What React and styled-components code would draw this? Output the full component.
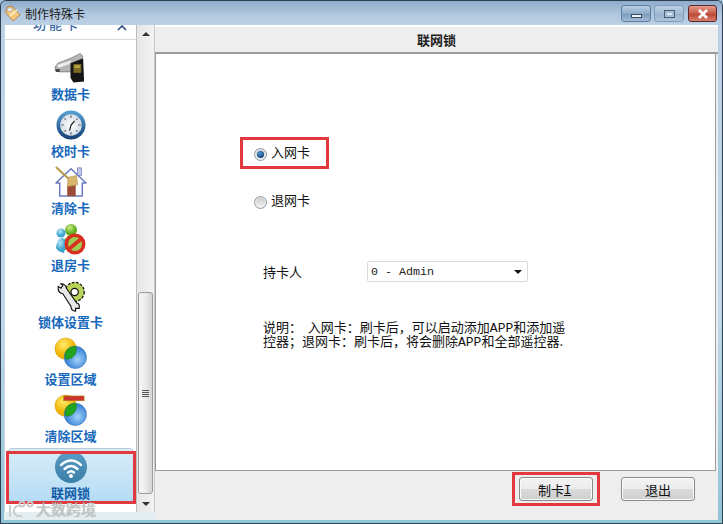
import React from 'react';
import styled, { createGlobalStyle } from 'styled-components';

const Global = createGlobalStyle`
  html, body { margin: 0; padding: 0; background: #a9c3dc; }
  * { box-sizing: border-box; }
`;
const CJK = `"Noto Sans CJK SC", "Liberation Sans", sans-serif`;
const MONO = `"Liberation Mono", "Noto Sans CJK SC", monospace`;

const Win = styled.div`
  position: relative; width: 723px; height: 524px; overflow: hidden;
  display: flex; flex-direction: column;
  background: linear-gradient(#a7c1de, #b9d0e6 25px, #c0d8ea 60%, #8fc4d6);
  border: 1px solid #2e3f4f; border-bottom-color: #2e4a58; border-radius: 6px 6px 0 0;
  font-family: ${CJK}; font-size: 13px; color: #111;
`;
const TitleBar = styled.div`
  height: 24px; flex: none; display: flex; align-items: center; padding: 0 5px 0 4px;
  background: linear-gradient(#8fabcb, #b3c9e0 60%, #bcd0e5);
`;
const TitleText = styled.span` margin-left: 4px; font-size: 12px; color: #1b1b1b; flex: 1; `;
const CtlGroup = styled.div` display: flex; gap: 3px; align-self: flex-start; margin-top: 4px; `;
const Ctl = styled.div`
  width: ${p => p.$w}px; height: 17px; display: flex; align-items: center; justify-content: center;
  margin-left: ${p => p.$close ? 1 : 0}px;
  border: 1px solid ${p => p.$close ? '#5a2a2a' : p.$dim ? '#7f9cba' : '#5f7f9f'}; border-radius: 3px;
  background: ${p => p.$close
    ? 'linear-gradient(#e39b8c, #c95a45 50%, #b84a35 55%, #d9806c)'
    : p.$dim
      ? 'linear-gradient(#bcd0e5, #a3bcd6 50%, #98b3cf 55%, #afc6dd)'
      : 'linear-gradient(#b9cee3, #8eacc9 50%, #7c9dbd 55%, #a3bcd6)'};
`;
const MinGlyph = styled.div` width: 11px; height: 4px; margin-top: 5px; background: #eef3f8; border: 1px solid #3c4c5c; `;
const MaxGlyph = styled.div` width: 11px; height: 8px; border: 1px solid #4c5c6c; background: #a6bed6;
  &::after { content: ''; display: block; width: 5px; height: 2px; margin: 2px auto; background: #dfe8f2; } `;
const Body = styled.div` flex: 1; min-height: 0; display: flex; padding: 0 4px 3px 3px; `;
const SideColumn = styled.div` flex: none; display: flex; align-items: flex-start; height: 495px; background: #e4edef; `;
const Side = styled.div` width: 133px; flex: none; display: flex; flex-direction: column; height: 487px; background: #fff;
  border-right: 1px solid #b5c0c8; border-left: 1px solid #c7d3dd; `;
const SideHead = styled.div`
  height: 15px; flex: none; position: relative; overflow: hidden; border-bottom: 1px solid #d3dbe3;
`;
const SideHeadText = styled.div`
  position: absolute; left: 28px; top: -11px; letter-spacing: 3px;
  color: #3a6aa5; font-size: 13px; font-weight: 500; white-space: nowrap;
`;
const Chev = styled.svg` position: absolute; left: 112px; top: 0; `;
const SideList = styled.div` flex: 1; display: flex; flex-direction: column; align-items: center; padding-top: 11px; `;
const Item = styled.div`
  width: ${p => p.$active ? 127 : 130}px; height: ${p => p.$active ? 55 : 57}px; flex: none; display: flex; flex-direction: column; align-items: center;
  color: #1668bc; font-weight: 700; font-size: 13px; line-height: 14px;
  ${p => p.$active && `
    margin-top: -2px;
    padding-top: 1px;
    background: linear-gradient(#d8ecf7, #b4dcf5);
    border: 1px solid #b9cbd6; border-bottom: 0; border-radius: 5px 5px 0 0;
    color: #125ba8;
  `}
`;
const IconBox = styled.div` height: 34px; display: flex; align-items: center; justify-content: center; flex: none; margin-bottom: 2px; `;
const ScrollTrack = styled.div`
  width: 18px; height: 487px; flex: none; display: flex; flex-direction: column; align-items: center;
  background: linear-gradient(90deg, #e6e6e6, #f2f2f2);
  border-right: 1px solid #c9c9c9;
`;
const Arrow = styled.div`
  width: 0; height: 0; flex: none; border-left: 4px solid transparent; border-right: 4px solid transparent;
  ${p => p.$up ? 'border-bottom: 4px solid #333; margin-top: 7px;' : 'border-top: 4px solid #333; margin-top: 8px;'}
`;
const Thumb = styled.div`
  width: 15px; height: 202px; flex: none; margin-top: 256px; display: flex; flex-direction: column; align-items: center; justify-content: center; gap: 1px;
  border: 1px solid #9a9a9a; border-radius: 3px; background: linear-gradient(90deg, #f7f7f7, #ededed 45%, #d4d4d4);
`;
const Grip = styled.div` width: 7px; height: 1px; background: #555; `;
const Main = styled.div` flex: 1; min-width: 0; display: flex; flex-direction: column; background: #eee; height: 495px; `;
const MainHead = styled.div`
  height: 29px; flex: none; display: flex; align-items: center; justify-content: center;
  font-weight: 700; font-size: 13px; color: #222; border-bottom: 2px solid #9a9a9a;
  border-top: 2px solid #fff;
`;
const Content = styled.div`
  flex: none; height: 417px; margin-right: 2px; background: #fff; border: 1px solid #9c9c9c; border-top: 0;
  padding: 83px 0 0 84px; display: flex; flex-direction: column; align-items: flex-start;
`;
const RadioRow = styled.div`
  position: relative; display: flex; align-items: center; height: 32px; gap: 4px; padding-left: 14px;
  margin-bottom: ${p => p.$mb}px;
`;
const RadioLabel = styled.span` margin-top: -3px; `;
const Mark = styled.div`
  position: absolute; pointer-events: none; border: 3px solid #e2393e;
`;
const RadioBox = styled.div`
  width: 13px; height: 13px; border-radius: 50%; flex: none; margin-top: 2px;
  border: 1px solid #8c9aa4; display: flex; align-items: center; justify-content: center;
  background: linear-gradient(#c9c9c9, #f4f4f4);
  box-shadow: inset 0 0 0 1px #ececec;
`;
const RadioDot = styled.div`
  width: 7px; height: 7px; border-radius: 50%; background: radial-gradient(circle at 40% 35%, #4f9ad8, #143e78 75%);
`;
const Field = styled.div` display: flex; align-items: center; margin: 43px 0 0 23px; height: 22px; `;
const FieldLabel = styled.span` width: 104px; `;
const Select = styled.div`
  width: 161px; height: 21px; border: 1px solid #d6dbe0; border-radius: 2px; display: flex; align-items: center;
  justify-content: space-between; padding: 1px 3px 0 3px; font-family: ${MONO}; font-size: 11.7px; color: #222; background: #fff;
`;
const Caret = styled.div` width: 0; height: 0; margin-right: 2px; border-left: 4px solid transparent; border-right: 4px solid transparent; border-top: 4px solid #111; `;
const Desc = styled.div` margin: 38px 0 0 23px; line-height: 14px; white-space: pre; color: #111; `;
const Latin = styled.span` font-family: ${MONO}; font-size: 13px; line-height: 0; `;
const Footer = styled.div` flex: 1; display: flex; justify-content: flex-end; align-items: flex-start; padding: 6px 23px 0 0; gap: 28px; `;
const Btn = styled.div`
  position: relative; width: 74px; height: 24px; display: flex; align-items: center; justify-content: center; padding-right: ${p => p.$pr || 0}px;
  border: 1px solid #8a8a8a; border-radius: 3px; color: #111;
  background: linear-gradient(#f4f4f4, #ececec 48%, #dadada 52%, #cfcfcf);
  box-shadow: inset 0 0 0 1px #fafafa;
`;
const Under = styled.span` text-decoration: underline; font-family: ${MONO}; font-size: 12px; margin-top: 3px; `;
const Water = styled.div`
  position: absolute; left: 7px; top: 499px; display: flex; align-items: center; gap: 2px; pointer-events: none;
  color: #c6cbcb; font-size: 15px; font-weight: 400; line-height: 18px; text-shadow: 0 0 1px rgba(110,110,110,.8);
`;

const CardIcon = () => (
  <svg width="33" height="32" viewBox="0 0 34 32">
    <path d="M1 15 L4 11 L17 6 L27 1 L30 4 L20 20 L6 20 L2 19 Z" fill="#b4b4b4" stroke="#666" strokeWidth=".6"/>
    <path d="M3 13 L18 8 L16 12 L5 16Z" fill="#ececec"/>
    <path d="M1 17 L6 17 L6 20 L2 20Z" fill="#4a4a4a"/>
    <path d="M17 11 L30 6 L31 30 L20 31 L17 26Z" fill="#161616"/>
    <rect x="20" y="12" width="8" height="9" fill="#7b6a24"/>
    <rect x="21" y="13" width="6" height="3" fill="#b4a044"/>
  </svg>
);
const ClockIcon = () => (
  <svg width="30" height="30" viewBox="0 0 32 32">
    <defs><linearGradient id="cl" x1="0" y1="0" x2="0" y2="1"><stop offset="0" stopColor="#5aa3d6"/><stop offset="1" stopColor="#123f74"/></linearGradient>
    <radialGradient id="cf"><stop offset="0" stopColor="#fff"/><stop offset="1" stopColor="#d5dee4"/></radialGradient></defs>
    <circle cx="16" cy="16" r="15.5" fill="url(#cl)"/>
    <circle cx="16" cy="16" r="11.5" fill="url(#cf)"/>
    <g stroke="#667" strokeWidth="1.2"><path d="M16 5.5v3M16 23.5v3M5.5 16h3M23.5 16h3M9 9l1.5 1.5M23 9l-1.5 1.5M9 23l1.5-1.5M23 23l-1.5-1.5"/></g>
    <path d="M16 16 L20 11.5 M16 16 L14.5 22" stroke="#222" strokeWidth="1.3" fill="none"/>
  </svg>
);
const HouseIcon = () => (
  <svg width="32" height="32" viewBox="0 0 34 34">
    <path d="M17 3 L33 18 L29 18 L29 32 L5 32 L5 18 L1 18Z" fill="#fff" stroke="#6a78c0" strokeWidth="1.6" strokeLinejoin="round"/>
    <rect x="24" y="2" width="4" height="8" fill="#c2c9e6" stroke="#6a78c0" strokeWidth=".8"/>
    <rect x="13" y="20" width="9" height="12" fill="#9c4c34"/>
    <path d="M1 1 L15 14" stroke="#b5994a" strokeWidth="2.2"/>
    <path d="M14 12 L23 10 L24 20 L13 22Z" fill="#d9b66e" stroke="#a98b45" strokeWidth=".5"/>
  </svg>
);
const NoPeopleIcon = () => (
  <svg width="30" height="31" viewBox="0 0 30 31">
    <defs><radialGradient id="gb" cx=".4" cy=".3"><stop offset="0" stopColor="#c8ef84"/><stop offset="1" stopColor="#62ac20"/></radialGradient>
    <radialGradient id="bb" cx=".4" cy=".3"><stop offset="0" stopColor="#b7e7f6"/><stop offset="1" stopColor="#3ca4cf"/></radialGradient></defs>
    <circle cx="15" cy="6" r="6" fill="url(#gb)"/><path d="M6 22 Q8 11 16 11 Q24 11 24 24 L8 26Z" fill="url(#gb)"/>
    <circle cx="5" cy="9" r="4.5" fill="url(#bb)"/><path d="M0 24 Q1 14 6 14 Q10 14 10 20 L8 29 Q2 28 0 24Z" fill="url(#bb)"/>
    <circle cx="19" cy="20" r="10.5" fill="#d82f22"/><circle cx="19" cy="20" r="7" fill="#9fce55"/>
    <path d="M13 25 L25 15" stroke="#d82f22" strokeWidth="3.6"/>
  </svg>
);
const WrenchIcon = () => (
  <svg width="32" height="31" viewBox="0 0 32 34">
    <circle cx="20" cy="12" r="10.5" fill="#b9d25a" stroke="#111" strokeWidth="1.4" strokeDasharray="3 1.6"/>
    <circle cx="20" cy="12" r="4" fill="#fff" stroke="#111" strokeWidth="1.3"/>
    <path d="M2 6 L5 8 L7 5 L5 3 Q10 3 11 8 L22 24 Q26 25 25 30 L21 30 L21 33 Q16 33 16 28 L7 14 Q1 13 2 6Z" fill="#e7e7e7" stroke="#111" strokeWidth="1.2"/>
  </svg>
);
const AreaIcon = ({ bar, id }) => (
  <svg width="33" height="33" viewBox="0 0 34 34">
    <defs>
      <radialGradient id={id + 'y'} cx=".4" cy=".3"><stop offset="0" stopColor="#ffe96a"/><stop offset="1" stopColor="#f2b400"/></radialGradient>
      <radialGradient id={id + 'b'} cx=".6" cy=".6"><stop offset="0" stopColor="#a2d2fb"/><stop offset="1" stopColor="#3d86d8"/></radialGradient>
    </defs>
    <circle cx="12" cy="12" r="11" fill={`url(#${id}y)`} stroke="#c99a1c" strokeWidth=".5"/>
    <circle cx="22" cy="21" r="11.5" fill={`url(#${id}b)`} stroke="#2b68ae" strokeWidth=".5"/>
    <path d="M11.5 20 Q11 11 21 9.5 L23 10 Q24 21 14 23 L11.5 22Z" fill="#23a41d" stroke="#137a12" strokeWidth=".5"/>
    {bar && <rect x="10" y="2" width="21" height="5" fill="#c9352a" stroke="#a8881e" strokeWidth=".6"/>}
  </svg>
);
const WifiIcon = () => (
  <svg width="32" height="32" viewBox="0 0 32 32">
    <defs><linearGradient id="wf" x1="0" y1="0" x2="0" y2="1"><stop offset="0" stopColor="#5a9ec6"/><stop offset="1" stopColor="#3a7ea8"/></linearGradient></defs>
    <circle cx="16" cy="16" r="16" fill="url(#wf)"/>
    <g fill="none" stroke="#fff" strokeWidth="2.4" strokeLinecap="round">
      <path d="M6 14 Q16 5 26 14"/><path d="M9.5 18 Q16 12 22.5 18"/><path d="M13 21.5 Q16 19 19 21.5"/>
    </g>
    <circle cx="16" cy="25" r="2" fill="#fff"/>
  </svg>
);
const TitleIcon = () => (
  <svg width="16" height="17" viewBox="0 0 16 17">
    <path d="M5 1 Q1 1 1 5 L1 8 L8 16 L15 10 L8 2Z" fill="#f4c97d" stroke="#a9793a" strokeWidth=".8"/>
    <path d="M2 3 L7 3 L8 5 L3 7Z" fill="#eef1f4" stroke="#888" strokeWidth=".5"/>
    <path d="M5 11 L12 5" stroke="#fff2d5" strokeWidth="1.5"/>
  </svg>
);

const items = [
  ['数据卡', <CardIcon />], ['校时卡', <ClockIcon />], ['清除卡', <HouseIcon />], ['退房卡', <NoPeopleIcon />],
  ['锁体设置卡', <WrenchIcon />], ['设置区域', <AreaIcon id="a1" />], ['清除区域', <AreaIcon id="a2" bar />],
];

export default function App() {
  return (
    <Win>
      <Global />
      <TitleBar>
        <TitleIcon />
        <TitleText>制作特殊卡</TitleText>
        <CtlGroup>
          <Ctl $w={30}><MinGlyph /></Ctl>
          <Ctl $w={30} $dim><MaxGlyph /></Ctl>
          <Ctl $w={29} $close>
            <svg width="12" height="10" viewBox="0 0 12 10"><path d="M2 1 L10 9 M10 1 L2 9" stroke="#fff" strokeWidth="2.6"/></svg>
          </Ctl>
        </CtlGroup>
      </TitleBar>
      <Body>
        <SideColumn>
          <Side>
            <SideHead>
              <SideHeadText>功能卡</SideHeadText>
              <Chev width="10" height="6" viewBox="0 0 10 6"><path d="M1 5 L5 1 L9 5" stroke="#2a4a80" strokeWidth="1.6" fill="none"/></Chev>
            </SideHead>
            <SideList>
              {items.map(([t, ic]) => (
                <Item key={t}><IconBox>{ic}</IconBox>{t}</Item>
              ))}
              <Item $active><IconBox><WifiIcon /></IconBox>联网锁</Item>
            </SideList>
          </Side>
          <ScrollTrack>
            <Arrow $up />
            <Thumb><Grip /><Grip /><Grip /><Grip /></Thumb>
            <Arrow />
          </ScrollTrack>
        </SideColumn>
        <Main>
          <MainHead>联网锁</MainHead>
          <Content>
            <RadioRow $mb={16}>
              <RadioBox><RadioDot /></RadioBox><RadioLabel>入网卡</RadioLabel>
              <Mark style={{ left: 0, top: 0, width: 89, height: 32 }} />
            </RadioRow>
            <RadioRow $mb={0}><RadioBox /><RadioLabel>退网卡</RadioLabel></RadioRow>
            <Field>
              <FieldLabel>持卡人</FieldLabel>
              <Select>0 - Admin<Caret /></Select>
            </Field>
            <Desc>
              {'说明：  入网卡：刷卡后，可以启动添加'}<Latin>APP</Latin>{'和添加遥'}<br />
              {'控器；退网卡：刷卡后，将会删除'}<Latin>APP</Latin>{'和全部遥控器.'}
            </Desc>
          </Content>
          <Footer>
            <Btn $pr={3}>制卡<Under>I</Under>
              <Mark style={{ left: -8, top: -6, width: 88, height: 34 }} />
            </Btn>
            <Btn>退出</Btn>
          </Footer>
        </Main>
      </Body>
      <Mark style={{ left: 5, top: 450, width: 130, height: 53 }} />
      <Water>
        <svg width="26" height="18" viewBox="0 0 26 18"><g fill="none" stroke="#c6cbcb" strokeWidth="1.8"><path d="M2 5v12"/><path d="M13 6 Q6 5 6 11 Q6 17 14 16"/><circle cx="14" cy="4" r="2.5"/><circle cx="22" cy="4" r="2.5"/></g></svg>
        大数跨境
      </Water>
    </Win>
  );
}
